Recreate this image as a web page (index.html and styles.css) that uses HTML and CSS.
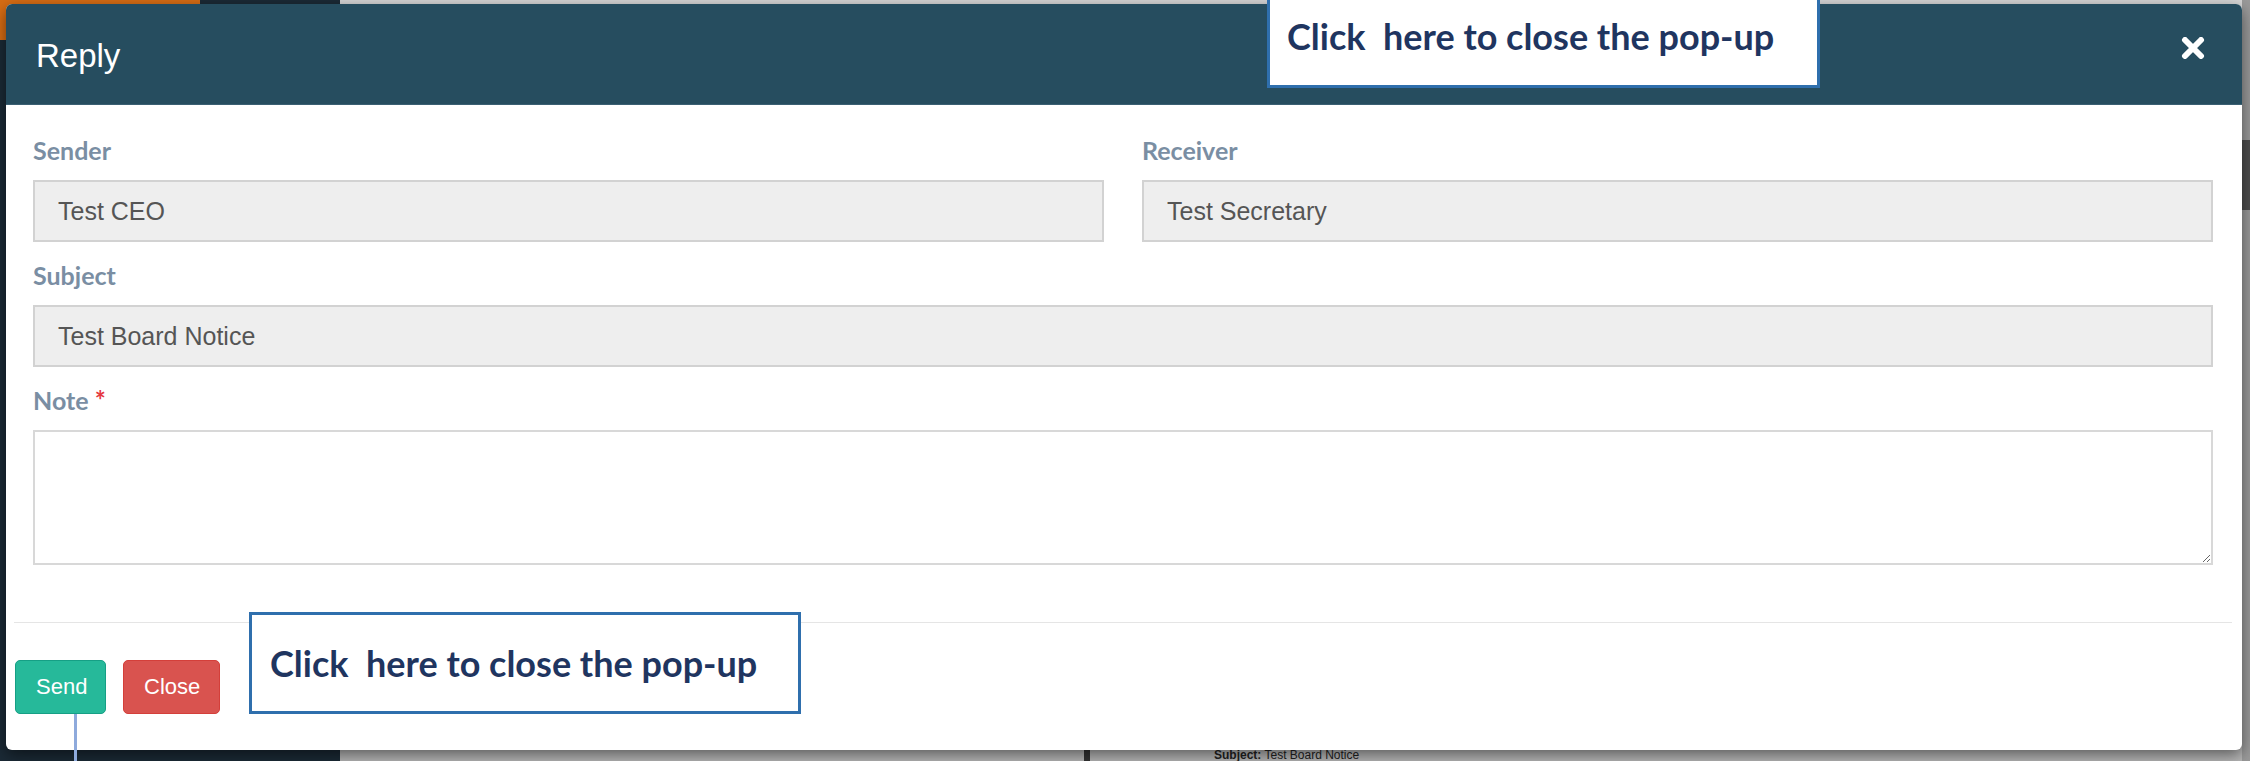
FILE: index.html
```html
<!DOCTYPE html>
<html>
<head>
<meta charset="utf-8">
<title>Reply</title>
<link rel="stylesheet" href="styles.css">
</head>
<body>
<div class="page">
  <aside class="sidebar"><div class="logo"></div></aside>
  <div class="main">
    <div class="topnav"></div>
    <div class="under-content">
      <div class="under-bar"></div>
      <div class="under-text"><b>Subject:</b> Test Board Notice</div>
    </div>
  </div>
  <div class="right-strip"><div class="right-dark"></div></div>
</div>

<div class="modal">
  <div class="modal-header">
    <h4 class="modal-title">Reply</h4>
    <button class="close-btn" type="button" aria-label="Close">
      <svg width="24" height="22" viewBox="0 0 24 22"><path d="M4 3 L20 19 M20 3 L4 19" stroke="#ffffff" stroke-width="6" stroke-linecap="round" fill="none"/></svg>
    </button>
  </div>
  <div class="modal-body">
    <div class="row">
      <div class="group">
        <label class="label">Sender</label>
        <input class="control" type="text" value="Test CEO" readonly>
      </div>
      <div class="group">
        <label class="label">Receiver</label>
        <input class="control" type="text" value="Test Secretary" readonly>
      </div>
    </div>
    <div class="group">
      <label class="label">Subject</label>
      <input class="control" type="text" value="Test Board Notice" readonly>
    </div>
    <div class="group last">
      <label class="label">Note <span class="req">*</span></label>
      <textarea class="textarea"></textarea>
    </div>
  </div>
  <div class="modal-footer">
    <button class="btn btn-send" type="button">Send</button>
    <button class="btn btn-close" type="button">Close</button>
  </div>
</div>

<div class="callout callout-top">Click&nbsp; here to close the pop-up</div>
<div class="callout callout-bottom">Click&nbsp; here to close the pop-up</div>
<div class="connector"></div>
</body>
</html>
```

FILE: styles.css
```css
html, body {
  margin: 0;
  padding: 0;
  width: 2250px;
  height: 761px;
  overflow: hidden;
  font-family: "Liberation Sans", Arial, sans-serif;
}

.page {
  display: flex;
  height: 761px;
}

.sidebar {
  width: 340px;
  background: #1b2a36;
}

.logo {
  width: 200px;
  height: 40px;
  background: #d86d14;
  border-radius: 0 0 30px 0;
}

.main {
  flex: 1;
  background: #b7b7b7;
  display: flex;
  flex-direction: column;
}

.topnav {
  height: 60px;
  background: #d6d6d6;
}

.under-content {
  flex: 1;
  display: flex;
  align-items: flex-end;
  padding-left: 744px;
}

.under-bar {
  width: 6px;
  height: 20px;
  background: #333;
}

.under-text {
  margin-left: 124px;
  font-size: 12px;
  line-height: 12px;
  color: #222;
}

.right-strip {
  width: 8px;
  background: #9a9a9a;
  padding-top: 140px;
}

.right-dark {
  height: 70px;
  background: #4e4e4e;
}

/* Modal */
.modal {
  position: absolute;
  left: 6px;
  top: 4px;
  width: 2236px;
  background: #ffffff;
  border-radius: 6px;
  box-shadow: 0 5px 15px rgba(0, 0, 0, 0.5);
  overflow: hidden;
}

.modal-header {
  height: 101px;
  background: #264d5f;
  display: flex;
  align-items: center;
  justify-content: space-between;
  padding: 0 37px 0 30px;
  border-bottom: 1px solid #3b6073;
  box-sizing: border-box;
}

.modal-title {
  margin: 0;
  font-family: "Liberation Sans", Arial, sans-serif;
  font-weight: normal;
  font-size: 33px;
  line-height: 1;
  color: #ffffff;
  padding-top: 2px;
}

.close-btn {
  background: none;
  border: 0;
  padding: 0;
  margin-top: -12px;
  width: 24px;
  height: 22px;
  display: flex;
}

.modal-body {
  padding: 30px 29px 57px 27px;
}

.row {
  display: grid;
  grid-template-columns: 1fr 1fr;
  column-gap: 38px;
}

.group {
  display: flex;
  flex-direction: column;
  margin-bottom: 18px;
}

.group.last {
  margin-bottom: 0;
}

.label {
  font-family: Lato, "Liberation Sans", sans-serif;
  font-weight: bold;
  font-size: 25px;
  line-height: 30px;
  height: 30px;
  color: #7a8ea3;
  margin-bottom: 15px;
}

.req {
  color: #e5383f;
  font-size: 26px;
}

.control {
  height: 62px;
  box-sizing: border-box;
  border: 2px solid #d2d2d2;
  background: #eeeeee;
  font-family: "Liberation Sans", Arial, sans-serif;
  font-size: 25px;
  color: #555555;
  padding: 0 23px;
  margin: 0;
  outline: none;
  width: 100%;
}

.textarea {
  height: 135px;
  box-sizing: border-box;
  border: 2px solid #d8d8d8;
  background: #ffffff;
  margin: 0;
  width: 100%;
  font-family: "Liberation Sans", Arial, sans-serif;
  font-size: 25px;
  resize: vertical;
  outline: none;
}

.modal-footer {
  margin: 0 10px 0 8px;
  border-top: 1px solid #e5e5e5;
  padding: 37px 0 36px 1px;
  display: flex;
  gap: 17px;
}

.btn {
  height: 54px;
  padding: 0 20px;
  border: 1px solid transparent;
  border-radius: 5px;
  font-family: "Liberation Sans", Arial, sans-serif;
  font-size: 22px;
  color: #ffffff;
  margin: 0;
}

.btn-send {
  background: #26b99a;
  border-color: #169f85;
  width: 91px;
}

.btn-close {
  background: #d9534f;
  border-color: #d43f3a;
  width: 97px;
}

/* Annotations */
.callout {
  position: absolute;
  box-sizing: border-box;
  background: #ffffff;
  border: 3px solid #2f6fad;
  font-family: Lato, "Liberation Sans", sans-serif;
  font-weight: bold;
  font-size: 36px;
  line-height: 42px;
  color: #1f3560;
  white-space: nowrap;
}

.callout-top {
  left: 1267px;
  top: -10px;
  width: 553px;
  height: 98px;
  padding: 22px 0 0 17px;
}

.callout-bottom {
  left: 249px;
  top: 612px;
  width: 552px;
  height: 102px;
  padding: 27px 0 0 18px;
}

.connector {
  position: absolute;
  left: 74px;
  top: 714px;
  width: 3px;
  height: 47px;
  background: #8eaadc;
}
```
